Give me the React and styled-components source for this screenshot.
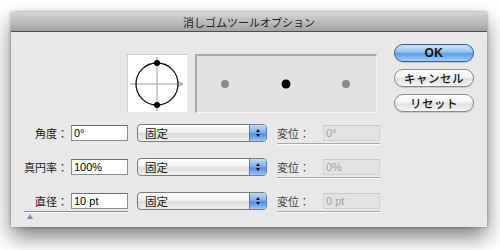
import React from "react";
import styled, { createGlobalStyle } from "styled-components";

const GlobalStyle = createGlobalStyle`
  html, body {
    margin: 0;
    padding: 0;
    background: #ffffff;
  }
  body {
    font-family: "Liberation Sans", "Noto Sans CJK JP", sans-serif;
    font-size: 11px;
    color: #1a1a1a;
  }
`;

const Page = styled.div`
  width: 500px;
  height: 250px;
  padding: 12px 0 0 11px;
  box-sizing: border-box;
  overflow: hidden;
`;

const Window = styled.div`
  width: 476px;
  height: 215px;
  background: #e8e8e8;
  box-shadow: 0 10px 20px rgba(0, 0, 0, 0.5), 0 0 3px rgba(0, 0, 0, 0.35);
  display: flex;
  flex-direction: column;
`;

const TitleBar = styled.div`
  height: 19px;
  border-bottom: 1px solid #4e4e4e;
  background: linear-gradient(#d6d6d6, #a4a4a4);
  display: flex;
  align-items: center;
  justify-content: center;
  font-family: "Noto Sans CJK JP", sans-serif;
  font-size: 11px;
  color: #222;
`;

const Body = styled.div`
  flex: 1;
  display: flex;
  justify-content: space-between;
  padding: 0 13px;
`;

const Left = styled.div`
  display: flex;
  flex-direction: column;
  padding-top: 22px;
`;

const Right = styled.div`
  display: flex;
  flex-direction: column;
  gap: 7px;
  padding-top: 12px;
`;

const PreviewRow = styled.div`
  display: flex;
  gap: 8px;
  padding-left: 103px;
  margin-bottom: 11px;
`;

const IconBox = styled.div`
  width: 60px;
  height: 58px;
  background: #fff;
  border-top: 1px solid #cfcfcf;
  border-left: 1px solid #cfcfcf;
  box-sizing: border-box;
`;

const DotBox = styled.div`
  width: 182px;
  height: 59px;
  background: #e2e2e2;
  border-top: 2px solid #a8a8a8;
  border-left: 2px solid #a8a8a8;
  border-right: 1px solid #f6f6f6;
  border-bottom: 1px solid #f6f6f6;
  box-sizing: border-box;
`;

const Rows = styled.div`
  display: flex;
  flex-direction: column;
  gap: 16px;
`;

const Row = styled.div`
  display: flex;
  align-items: flex-start;
  height: 18px;
`;

const FieldGroup = styled.div`
  display: flex;
  flex-direction: column;
  width: 104px;
`;

const FieldLine = styled.div`
  display: flex;
  align-items: center;
  height: 18px;
`;

const Label = styled.span`
  width: ${(p) => p.$width}px;
  text-align: ${(p) => p.$align || "right"};
  font-family: "Noto Sans CJK JP", sans-serif;
  font-size: 11px;
  color: ${(p) => (p.$muted ? "#444" : "#1a1a1a")};
  white-space: nowrap;
`;

const TextInput = styled.div`
  width: 57px;
  height: 16px;
  margin-left: ${(p) => (p.$disabled ? 0 : 3)}px;
  box-sizing: border-box;
  background: ${(p) => (p.$disabled ? "#e3e3e3" : "#fff")};
  border: 1px solid ${(p) => (p.$disabled ? "#d2d2d2" : "#8e8e8e")};
  border-top-color: ${(p) => (p.$disabled ? "#c8c8c8" : "#6e6e6e")};
  color: ${(p) => (p.$disabled ? "#a0a0a0" : "#000")};
  font-size: 11px;
  line-height: 14px;
  padding-left: 2px;
`;

const Slider = styled.div`
  width: 104px;
  height: 1px;
  margin-top: 1px;
  background: #8a8a8a;
  box-shadow: 0 1px 0 #fafafa;
`;

const Thumb = styled.div`
  width: 0;
  height: 0;
  margin: 2px 0 0 3px;
  border-left: 3px solid transparent;
  border-right: 3px solid transparent;
  border-bottom: 5px solid #7f8fb8;
`;

const Select = styled.div`
  width: 130px;
  height: 18px;
  margin-left: 9px;
  box-sizing: border-box;
  border: 1px solid #7a7a7a;
  border-radius: 4px;
  background: linear-gradient(#ffffff, #f2f2f2 45%, #dcdcdc 55%, #f0f0f0);
  display: flex;
  align-items: center;
  overflow: hidden;
`;

const SelectText = styled.span`
  flex: 1;
  padding-left: 7px;
  font-family: "Noto Sans CJK JP", sans-serif;
  font-size: 11.5px;
`;

const SelectArrows = styled.div`
  width: 16px;
  height: 100%;
  border-left: 1px solid #5a78b0;
  background: linear-gradient(#c4dcf8, #78a8ea 50%, #4f8be0 55%, #9cc8f6);
  display: flex;
  flex-direction: column;
  align-items: center;
  justify-content: center;
  gap: 2px;
`;

const ArrowTip = styled.div`
  width: 0;
  height: 0;
  border-left: 2.5px solid transparent;
  border-right: 2.5px solid transparent;
  ${(p) => (p.$down ? "border-top: 3px solid #111;" : "border-bottom: 3px solid #111;")}
`;

const OffsetGroup = styled.div`
  display: flex;
  flex-direction: column;
  margin-left: 10px;
  width: 103px;
`;

const OffsetLine = styled.div`
  display: flex;
  align-items: center;
  height: 18px;
`;

const Underline = styled.div`
  height: 1px;
  margin-top: 1px;
  background: #a8a8a8;
  box-shadow: 0 1px 0 #fafafa;
`;

const Button = styled.div`
  width: 80px;
  height: 18px;
  box-sizing: border-box;
  border-radius: 9px;
  display: flex;
  align-items: center;
  justify-content: center;
  font-family: "Liberation Sans", "Noto Sans CJK JP", sans-serif;
  font-size: ${(p) => (p.$primary ? 12 : 11.5)}px;
  font-weight: ${(p) => (p.$primary ? 700 : 500)};
  letter-spacing: 0.5px;
  color: #111;
  border: 1px solid ${(p) => (p.$primary ? "#3b5c9a" : "#8a8a8a")};
  background: ${(p) =>
    p.$primary
      ? "linear-gradient(#cfe5fb, #8fc0f2 45%, #5c9ee8 55%, #9fd0fb)"
      : "linear-gradient(#ffffff, #f4f4f4 45%, #e0e0e0 55%, #f6f6f6)"};
  box-shadow: 0 1px 1px rgba(0, 0, 0, 0.15);
`;

function BrushIcon() {
  return (
    <svg width="58" height="56" viewBox="0 0 58 56">
      <line x1="2" y1="29" x2="54" y2="29" stroke="#9a9a9a" strokeWidth="1" />
      <polyline points="50,26.5 55,29 50,31.5" fill="none" stroke="#9a9a9a" strokeWidth="1" />
      <line x1="29" y1="2" x2="29" y2="56" stroke="#9a9a9a" strokeWidth="1" />
      <circle cx="29" cy="29" r="21" fill="none" stroke="#111" strokeWidth="1.3" />
      <circle cx="29" cy="8" r="3" fill="#000" />
      <circle cx="29" cy="50" r="3" fill="#000" />
    </svg>
  );
}

function Dots() {
  return (
    <svg width="179" height="56" viewBox="0 0 179 56">
      <circle cx="28" cy="28" r="4" fill="#8a8a8a" />
      <circle cx="89" cy="28" r="4.5" fill="#000" />
      <circle cx="149" cy="28" r="4" fill="#8a8a8a" />
    </svg>
  );
}

const rows = [
  { label: "角度：", value: "0°", offset: "0°" },
  { label: "真円率：", value: "100%", offset: "0%" },
  { label: "直径：", value: "10 pt", offset: "0 pt", slider: true },
];

export default function App() {
  return (
    <Page>
      <GlobalStyle />
      <Window>
        <TitleBar>消しゴムツールオプション</TitleBar>
        <Body>
          <Left>
            <PreviewRow>
              <IconBox>
                <BrushIcon />
              </IconBox>
              <DotBox>
                <Dots />
              </DotBox>
            </PreviewRow>
            <Rows>
              {rows.map((r) => (
                <Row key={r.label}>
                  <FieldGroup>
                    <FieldLine>
                      <Label $width={44}>{r.label}</Label>
                      <TextInput>{r.value}</TextInput>
                    </FieldLine>
                    {r.slider && (
                      <>
                        <Slider />
                        <Thumb />
                      </>
                    )}
                  </FieldGroup>
                  <Select>
                    <SelectText>固定</SelectText>
                    <SelectArrows>
                      <ArrowTip />
                      <ArrowTip $down />
                    </SelectArrows>
                  </Select>
                  <OffsetGroup>
                    <OffsetLine>
                      <Label $width={46} $align="left" $muted>
                        変位：
                      </Label>
                      <TextInput $disabled>{r.offset}</TextInput>
                    </OffsetLine>
                    <Underline />
                  </OffsetGroup>
                </Row>
              ))}
            </Rows>
          </Left>
          <Right>
            <Button $primary>OK</Button>
            <Button>キャンセル</Button>
            <Button>リセット</Button>
          </Right>
        </Body>
      </Window>
    </Page>
  );
}
